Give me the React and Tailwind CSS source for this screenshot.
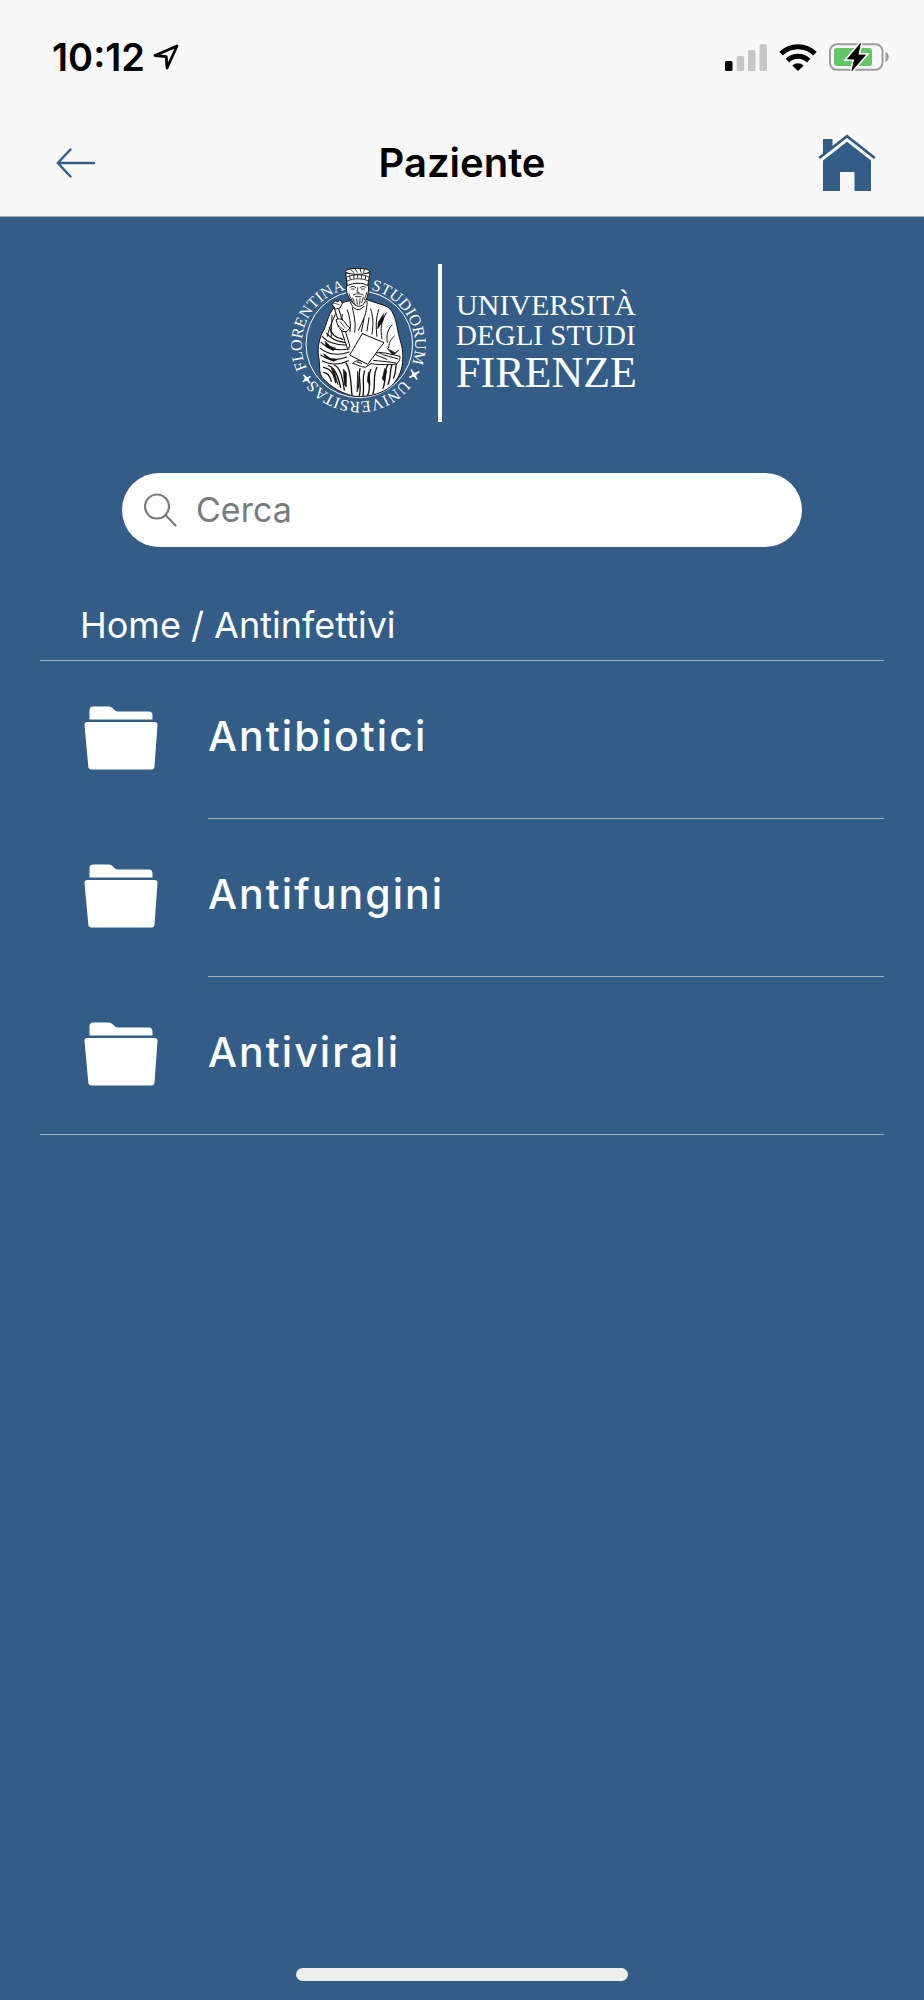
import React from "react";

const folders = ["Antibiotici", "Antifungini", "Antivirali"];

function LocationArrow() {
  return (
    <svg className="h-[26px] w-[26px]" viewBox="0 0 26 26" fill="none" stroke="#000" strokeWidth="2.8" strokeLinejoin="round" aria-hidden="true">
      <path d="M24 2 2 11.5 13.3 12.6 14 24Z" />
    </svg>
  );
}

function SignalIcon() {
  return (
    <svg className="h-[27px] w-[42px]" viewBox="0 0 42 27" aria-hidden="true">
      <rect x="0" y="17" width="7.5" height="10" rx="1.6" fill="#000" />
      <rect x="11.7" y="12" width="7.5" height="15" rx="1.6" fill="#c6c6c6" />
      <rect x="23" y="6" width="7.5" height="21" rx="1.6" fill="#c6c6c6" />
      <rect x="34.5" y="0.3" width="7.5" height="26.7" rx="1.6" fill="#c6c6c6" />
    </svg>
  );
}

function WifiIcon() {
  return (
    <svg className="h-[27px] w-[38px]" viewBox="0 0 38 27" aria-hidden="true">
      <g fill="none" stroke="#000" strokeWidth="5">
        <path d="M2 9.6a24.5 24.5 0 0 1 34 0" />
        <path d="M8.4 16.6a15.2 15.2 0 0 1 21.2 0" />
      </g>
      <path d="M13.3 21.4a8.4 8.4 0 0 1 11.4 0L19 27Z" fill="#000" />
    </svg>
  );
}

function BatteryIcon() {
  const bolt = "M31.5 0.5 18.5 16h7.2l-2.8 11.7L36.5 12h-7.6Z";
  return (
    <svg className="h-7 w-[61px]" viewBox="0 0 61 28" aria-hidden="true">
      <rect x="1" y="1.2" width="52.5" height="25.6" rx="7" fill="none" stroke="#9b9b9b" strokeWidth="1.9" />
      <rect x="5" y="5" width="38" height="18" rx="3" fill="#62c766" />
      <path d="M56.5 9v10c4.3-1.8 4.3-8.2 0-10Z" fill="#9b9b9b" />
      <path d={bolt} fill="#f8f8f8" stroke="#f8f8f8" strokeWidth="4" />
      <path d={bolt} fill="#000" stroke="#000" strokeWidth="0.8" strokeLinejoin="round" />
    </svg>
  );
}

function HomeIcon() {
  return (
    <svg className="h-[58px] w-[58px]" viewBox="0 0 58 58" aria-hidden="true">
      <path d="M5 5h9.5v8.5L5 20.5Z" fill="#335d87" />
      <path d="M1.2 24 29 2.2 56.8 24" fill="none" stroke="#335d87" strokeWidth="2.8" />
      <path d="M29 7.8 53 26.5V57H36.5V38H22V57H5V26.5Z" fill="#335d87" />
    </svg>
  );
}

function FolderIcon() {
  return (
    <svg className="h-16 w-[74px] shrink-0" viewBox="0 0 74 64" fill="#fff" aria-hidden="true">
      <path d="M5.5 13.5V4.2Q5.5.5 9.2.5H25q2 0 3.4 1.6L31 4.5Q32 5.5 34 5.5H64.5q4 0 4 4v4Z" />
      <path d="M3.5 16H70.5q3.200 0 3 3L70.5 60.5q-.2 3-3.200 3H7.500q-3 0-3.200-3L.5 19q-.2-3 3-3Z" />
    </svg>
  );
}

function Seal() {
  return (
    <svg className="h-[175px] w-[139px] shrink-0 overflow-visible" viewBox="18 0 417 525" role="img" aria-label="Florentina Studiorum Universitas">
      <defs>
        <path id="seal-upper" d="M232 440a170 170 0 0 1 0-340a170 170 0 0 1 0 340" />
        <path id="seal-lower" d="M232 100a170 170 0 0 1 0 340a170 170 0 0 1 0-340" />
      </defs>

      <circle cx="235" cy="268" r="160" fill="none" stroke="#fff" strokeWidth="3" />

      <g fill="#fff" fontFamily="'Liberation Serif', serif" fontSize="48" textAnchor="middle">
        <text><textPath href="#seal-upper" startOffset="344">FLORENTINA</textPath></text>
        <text><textPath href="#seal-lower" startOffset="181">STUDIORUM</textPath></text>
        <text><textPath href="#seal-lower" startOffset="534">UNIVERSITAS</textPath></text>
      </g>
      <g stroke="#fff" strokeWidth="5" strokeLinecap="round">
        <path d="M391 345l16 27M387 367l26-16M67 379l20-14M69 361l17 22" />
      </g>
      <g fill="#fff">
        <circle cx="400" cy="359" r="7" />
        <circle cx="77" cy="372" r="7" />
      </g>

      <g stroke="#111" strokeLinejoin="round" strokeLinecap="round">
        <path
          fill="#fff"
          strokeWidth="3"
          d="M207 137C190 140 168 148 157 160C142 180 138 203 130 222C116 246 108 275 113 305C118 335 112 350 124 368C150 398 188 418 222 424C264 427 313 415 340 384C354 366 366 340 365 313C368 284 357 256 352 235C347 206 341 170 320 156C299 146 278 142 258 134Z"
        />
        <path
          fill="none"
          strokeWidth="3"
          d="M208 140C215 165 235 172 249 154M258 138C260 170 246 198 232 226M214 158C220 185 225 205 221 232M175 152C158 190 145 215 139 244M153 181C153 206 149 226 151 244M184 178C180 202 181 220 188 234M199 165C207 188 210 206 207 230M269 162C276 182 278 207 273 237M293 164C285 188 284 214 288 244M316 174C300 198 297 222 303 251M333 210C322 220 315 238 319 262M340 244C330 252 324 260 323 278M249 191L241 230M264 188L258 228"
        />
        <path
          fill="none"
          strokeWidth="3.5"
          d="M124 245C138 261 165 271 200 270M120 262C141 282 171 288 205 282M118 280C143 300 176 302 204 291M119 300C143 316 174 317 197 306M124 318C149 330 178 329 202 317M145 217C150 237 166 249 186 253M137 235C150 251 170 260 190 262"
        />
        <path
          fill="none"
          strokeWidth="4"
          d="M128 337C148 341 157 352 164 383M143 332C164 340 171 366 179 397M160 330C181 340 185 376 190 405M195 324C211 345 209 387 213 421M128 352C140 353 147 364 151 379M237 341C230 366 243 393 235 421M251 348C242 371 251 394 246 422M270 343C256 364 273 395 260 421M288 337C274 359 285 389 276 416M321 328C308 347 317 374 306 400M337 321C324 340 332 363 321 388M352 314C340 330 348 348 338 369"
        />
        <path fill="#111" strokeWidth="2" d="M151 340L165 377L171 389L160 348ZM187 343L190 389L196 396L196 354ZM230 350L228 411L234 393ZM262 352L259 379L267 391L265 359ZM311 341L304 371L310 379L317 349ZM133 260L148 274L164 280L157 287L136 276ZM129 297L149 311L169 314L157 319L134 309ZM320 281L342 293L353 286L337 301ZM181 187L188 218L196 231L191 205ZM308 177L292 201L290 221L306 197Z" />
        <path fill="#fff" strokeWidth="3" d="M250 309C269 295 290 290 313 294L357 304C358 319 348 331 331 328C305 329 288 329 270 326L253 337C236 335 227 328 215 325C225 315 235 316 246 319Z" />
        <path fill="none" strokeWidth="3" d="M282 297C294 306 306 307 318 313M295 293C313 305 331 304 351 312M278 316C296 319 321 319 344 324M229 321L242 325M238 315L252 324M249 310L263 320" />
        <path fill="#fff" strokeWidth="3" d="M244 236L309 263C291 285 277 306 260 328L206 300C219 280 230 258 244 236Z" />
        <path fill="#fff" strokeWidth="3" d="M160 156L170 151L207 275L200 280Z" />
        <path fill="#fff" strokeWidth="3" d="M154 148L162 137L171 140L177 134L184 145L177 159L164 162Z" />
        <path fill="#fff" strokeWidth="3" d="M166 194C177 187 190 195 197 211L207 219L198 229L186 230L173 217Z" />
        <path fill="none" strokeWidth="2" d="M177 200L191 217M172 211L188 224M161 145L175 149" />
        <path fill="#fff" strokeWidth="3" d="M198 85C192 105 199 124 211 137C218 154 238 160 249 146C257 132 267 111 261 85Z" />
        <path fill="#fff" strokeWidth="3" d="M194 55L199 92C219 82 243 82 260 92L267 55Z" />
        <ellipse cx="230" cy="49" rx="37" ry="9" fill="#fff" strokeWidth="3" />
        <path fill="none" strokeWidth="2.500" d="M197 66C218 57 246 57 264 66M198 78C220 69 244 69 262 78M206 62L207 72M218 60L219 70M230 58V69M242 60L241 70M254 62L253 72M210 45L219 53M223 42L229 52M237 41L240 52M250 43L248 53" />
        <path fill="none" strokeWidth="2.500" d="M208 97C214 93 219 93 224 98M237 98C243 93 249 93 255 97M230 98L228 112H235M211 102H220M241 102H250M217 120C224 115 239 115 247 120M223 125H240M204 116C209 132 216 142 223 148M215 129L220 141M227 132L229 148M237 131L236 148M247 127L242 143M258 112L250 134" />
      </g>
    </svg>
  );
}

export default function App() {
  return (
    <div className="flex min-h-screen flex-col bg-[#335d87] font-['Inter',sans-serif] text-white">
      <header className="border-b border-[#a9adb2] bg-[#f8f8f8] text-black">
        <div className="flex h-[114px] items-center justify-between pr-[34px] pl-[52px]">
          <div className="flex items-center gap-2">
            <span className="text-[38px] leading-10 font-semibold">10:12</span>
            <LocationArrow />
          </div>
          <div className="flex items-center gap-3">
            <SignalIcon />
            <WifiIcon />
            <BatteryIcon />
          </div>
        </div>
        <nav className="grid h-[102px] grid-cols-[1fr_auto_1fr] items-center px-12 pb-1">
          <button type="button" aria-label="Indietro" className="justify-self-start pl-2">
            <svg className="h-[30px] w-10" viewBox="0 0 40 30" fill="none" stroke="#335d87" strokeWidth="2.400" strokeLinecap="round" strokeLinejoin="round" aria-hidden="true">
              <path d="M14.500 1.500 1.800 15l12.700 13.500M1.800 15H38" />
            </svg>
          </button>
          <h1 className="text-[40px] leading-[48px] font-semibold">Paziente</h1>
          <button type="button" aria-label="Home" className="justify-self-end">
            <HomeIcon />
          </button>
        </nav>
      </header>

      <main className="flex flex-1 flex-col">
        <div className="flex items-center justify-center pt-[38px]">
          <Seal />
          <div className="ml-3 h-[158px] w-1 bg-white" />
          <div className="ml-[14px] font-['Liberation_Serif',serif]">
            <div className="text-[30px] leading-[30px]">UNIVERSITÀ</div>
            <div className="text-[29px] leading-[30px]">DEGLI STUDI</div>
            <div className="text-[44px] leading-[46px]">FIRENZE</div>
          </div>
        </div>

        <label className="mx-[122px] mt-[43px] flex h-[74px] items-center gap-[18px] rounded-full bg-white px-[22px]">
          <svg className="h-[34px] w-[34px] shrink-0" viewBox="0 0 34 34" fill="none" stroke="#7a7a7a" strokeWidth="2.200" strokeLinecap="round" aria-hidden="true">
            <circle cx="13" cy="13.500" r="12" />
            <path d="M21.500 22l10 10.500" />
          </svg>
          <input
            type="search"
            aria-label="Cerca"
            placeholder="Cerca"
            className="min-w-0 flex-1 bg-transparent text-[34px] leading-10 text-black outline-none placeholder:text-[#7a7a7a]"
          />
        </label>

        <div className="mx-10 mt-[54px] border-b border-[#a3b1c2] pb-[11px] pl-10 text-[36px] leading-[48px]">
          <a href="#home">Home</a> / <a href="#antinfettivi">Antinfettivi</a>
        </div>

        <ul className="mx-10 border-b border-[#a3b1c2]">
          {folders.map((name) => (
            <li key={name} className="group">
              <a href={"#" + name.toLowerCase()} className="flex items-stretch pl-11">
                <span className="flex items-center pb-1">
                  <FolderIcon />
                </span>
                <span className="ml-[50px] flex h-[158px] flex-1 items-center border-b border-[#a3b1c2] pb-2 text-[41px] leading-[48px] font-medium tracking-wider group-last:h-[157px] group-last:border-b-0">
                  {name}
                </span>
              </a>
            </li>
          ))}
        </ul>
      </main>

      <footer className="flex justify-center pb-[19px]">
        <div className="h-[13px] w-[36%] rounded-full bg-[#eee]" />
      </footer>
    </div>
  );
}
